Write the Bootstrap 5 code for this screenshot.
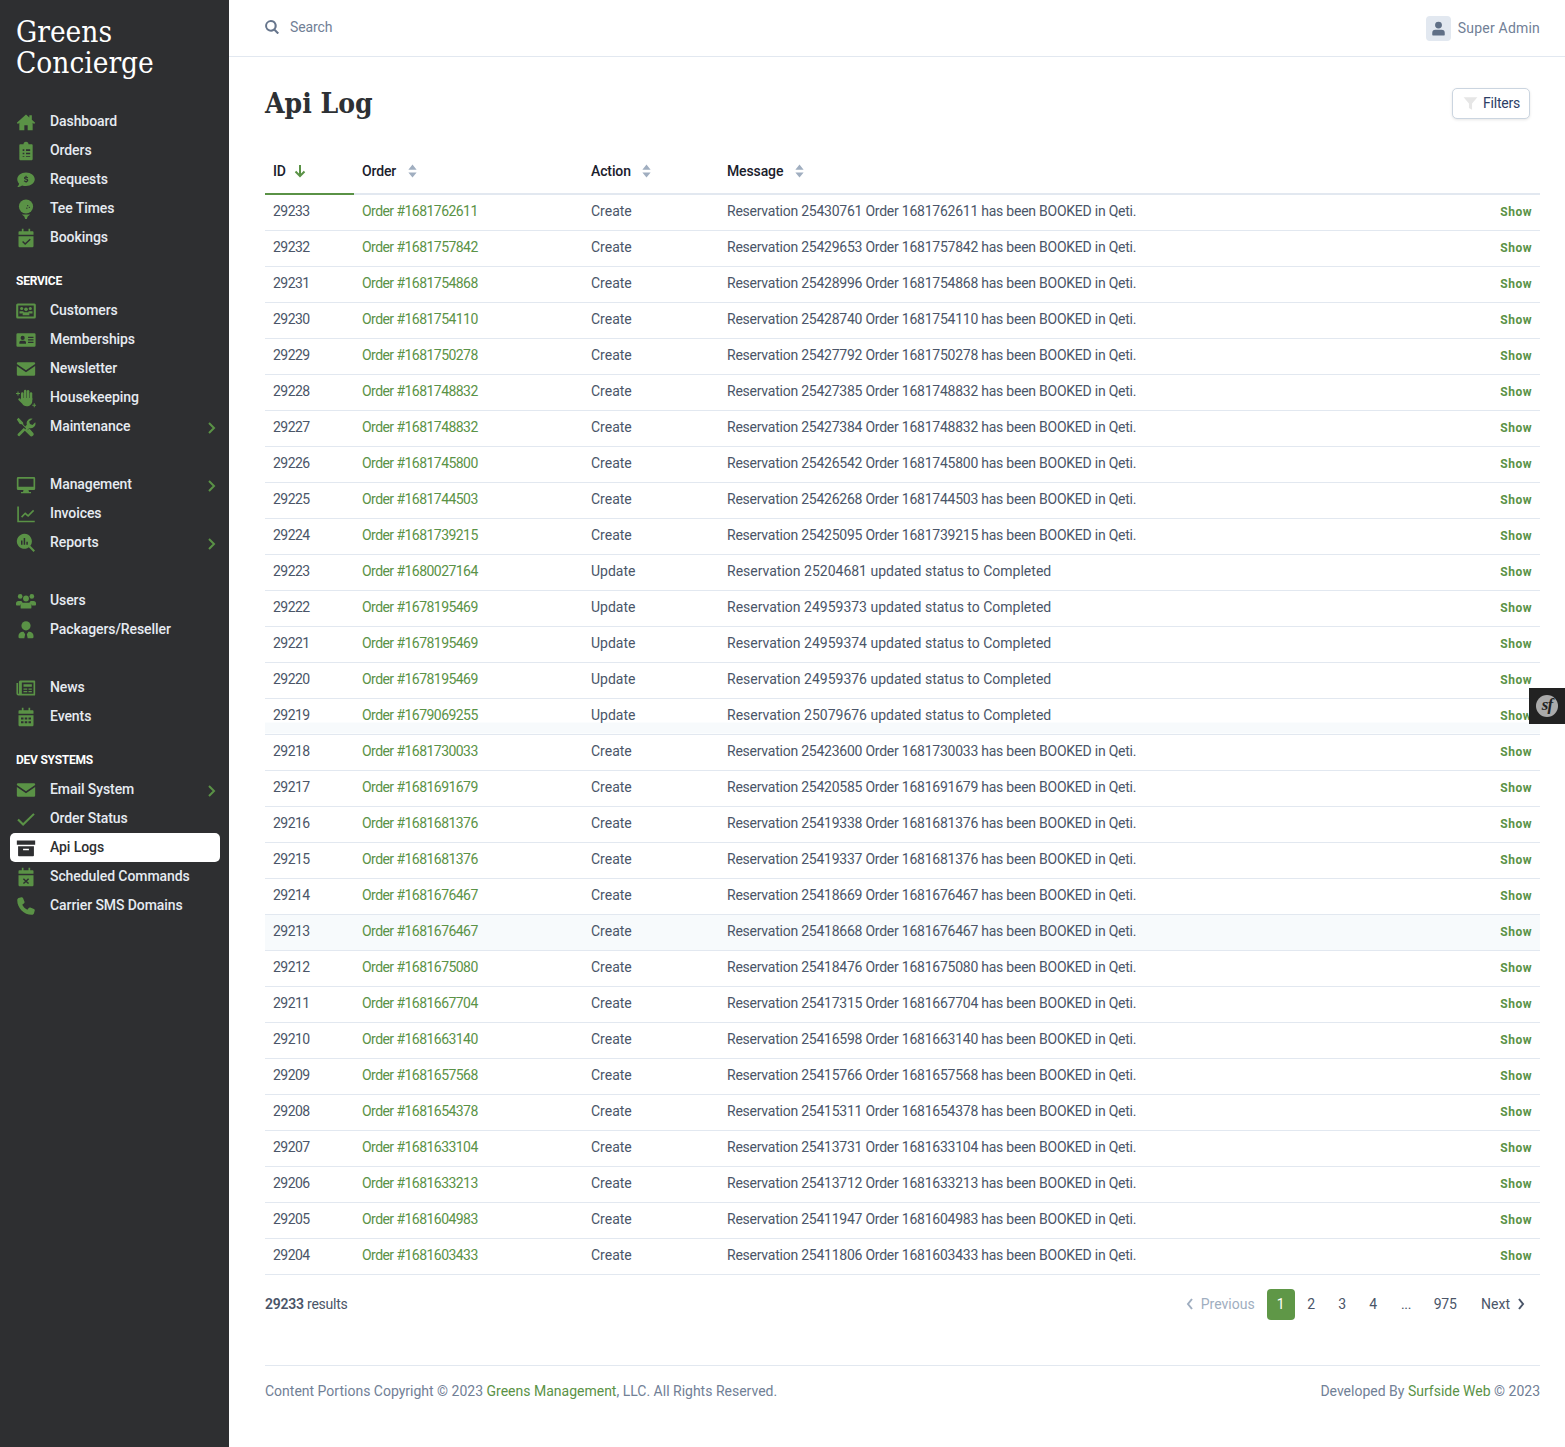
<!DOCTYPE html>
<html lang="en">
<head>
  <meta charset="UTF-8" />
  <title>Api Log</title>
  <link href="https://cdn.jsdelivr.net/npm/bootstrap@5.3.0/dist/css/bootstrap.min.css" rel="stylesheet" />
  <style>
    body { font-family: Roboto, "Noto Sans", sans-serif; font-size: 14px; color: #4a5568; background: #fff; letter-spacing: -.24px; }
    a { text-decoration: none; color: #5a9246; }
    .side-bar { width: 229px; flex: 0 0 229px; min-height: 1447px; background: #2e2f31; }
    .brand-name { font-family: "DejaVu Serif Condensed", "Liberation Serif", serif; font-size: 29.5px; line-height: 31px; color: #fff; padding: 17px 16px 0; height: 107px; letter-spacing: 0; }
    .side-group { margin-bottom: 29px; }
    .side-group.tight { margin-bottom: 15px; }
    .side-label { height: 29px; line-height: 29px; padding-left: 16px; font-size: 12px; font-weight: 700; color: #fff; }
    .side-link { display: flex; align-items: center; height: 29px; margin: 0 9px 0 10px; padding: 0 4px 0 6px; color: #e6ebf1; font-weight: 500; border-radius: 5px; letter-spacing: -.08px; }
    .side-link svg.ico { width: 20px; height: 20px; margin-right: 14px; fill: #5a9246; flex: none; }
    .side-link svg.chev { width: 10px; height: 12px; margin-left: auto; margin-top: 3px; stroke: #5a9246; stroke-width: 2; fill: none; }
    .side-link.current { background: #fff; color: #2e2f31; }
    .side-link.current svg.ico { fill: #2e2f31; }
    .main-area { flex: 1 1 auto; min-width: 0; }
    .top-strip { height: 57px; border-bottom: 1px solid #e2e8f0; padding: 0 25px 0 36px; }
    .top-strip svg { width: 14px; height: 14px; fill: #66758c; margin-right: 11px; }
    .search-box { padding-bottom: 2px; }
    .search-hint { color: #718096; letter-spacing: -.1px; }
    .who-box { width: 25px; height: 25px; background: #e2e8f0; border-radius: 4px; margin-right: 7px; }
    .who-box svg { width: 15px; height: 15px; margin: 0; fill: #5f6f86; }
    .who-name { color: #718096; letter-spacing: .2px; }
    .page-body { padding: 0 25px 0 36px; }
    .page-head { height: 92px; padding-right: 10px; }
    .page-title { font-family: "DejaVu Serif Condensed", "Liberation Serif", serif; font-size: 28px; font-weight: 700; color: #2d3034; margin: 0; padding-top: 1px; letter-spacing: 0; }
    .filter-btn { height: 31px; width: 78px; padding: 0 8px 0 10px; font-size: 14px; color: #2c3e66; background: #fff; border: 1px solid #cbd5e0; border-radius: 5px; box-shadow: 0 1px 3px rgba(0,0,0,.1); letter-spacing: -.2px; }
    .filter-btn svg { width: 15px; height: 15px; fill: #e6e6e6; margin-right: 5px; }
    .log-table { table-layout: fixed; margin: 0; width: 100%; font-size: 14px; color: #4a5568; }
    .log-table th { height: 45px; padding: 0 8px; font-weight: 500; color: #1a202c; border-bottom: 2px solid #e2e8f0; vertical-align: middle; letter-spacing: -.12px; }
    .log-table th.sorted { border-bottom-color: #5a9246; }
    .log-table th svg { width: 11px; height: 14px; margin-left: 7px; vertical-align: -2px; fill: #a0aec0; }
    .log-table th.sorted svg { width: 12px; margin-left: 5px; stroke: #5a9246; fill: none; stroke-width: 2; }
    .log-table td { height: 36px; padding: 0 8px 2px; vertical-align: middle; border-bottom: 1px solid #e2e8f0; color: #4a5568; }
    .log-table tr.hovered td { background: #f7fafc; }
    .log-table tr.half-hover td { background: linear-gradient(transparent 24px, #f7fafc 24px); }
    .log-table td a { color: #5a9246; }
    .log-table .num-cell { letter-spacing: -.55px; }
    .log-table .act-cell { letter-spacing: 0; }
    .log-table .msg-update { letter-spacing: 0; }
    .show-link { font-size: 12px; font-weight: 700; letter-spacing: .5px; }
    .results-row { height: 59px; }
    .pager-list { margin: 0 15px 0 0; align-items: center; }
    .pager-list .page-link { border: 0; background: none; color: #4a5568; padding: 0; height: 31px; line-height: 31px; font-size: 14px; text-align: center; box-shadow: none; }
    .pager-list .page-item.active .page-link { background: #5f9747; color: #fff; border-radius: 4px; width: 28px; }
    .pager-list .page-item.disabled .page-link { color: #a0aec0; letter-spacing: 0; }
    .pager-list svg { width: 8px; height: 12px; fill: none; stroke: currentColor; stroke-width: 2; vertical-align: -1px; }
    .pager-list .num { width: 31px; }
    .pager-list .gap-num { width: 35px; }
    .pager-list .last-num { width: 43px; }
    .pager-list .prev-item { margin-right: 13px; }
    .pager-list .next-item { margin-left: 15px; letter-spacing: 0; }
    .pager-list .first-num { margin-left: 1.5px; }
    .foot-row { margin-top: 31px; border-top: 1px solid #e2e8f0; height: 52px; color: #718096; letter-spacing: 0; }
    .sf-tab { position: fixed; right: 0; top: 688px; width: 36px; height: 36px; background: #222; display: flex; align-items: center; justify-content: center; }
    .sf-mark { width: 22px; height: 22px; border-radius: 50%; background: #aaa; color: #222; font-family: "Liberation Serif", serif; font-style: italic; font-weight: 700; font-size: 17px; line-height: 20px; text-align: center; letter-spacing: -1px; }
  </style>
</head>
<body>
  <svg width="0" height="0" class="position-absolute">
    <symbol id="i-home" viewBox="0 0 24 24"><path d="M12 3 1 13l1.300 1.400L4 13v9h6v-6h4v6h6v-9l1.700 1.400L23 13l-4-3.600V4h-3v2.700z"/></symbol>
    <symbol id="i-clip" viewBox="0 0 24 24"><path fill-rule="evenodd" d="M5 4h4a3 3 0 0 1 6 0h4a1 1 0 0 1 1 1v17a1 1 0 0 1-1 1H5a1 1 0 0 1-1-1V5a1 1 0 0 1 1-1zM8 10v2h2v-2zm4 0v2h5v-2zM8 14v2h2v-2zm4 0v2h5v-2zM8 18v1h2v-1zm4 0v1h5v-1z"/></symbol>
    <symbol id="i-req" viewBox="0 0 24 24"><path d="M12 3C6 3 1.500 6.600 1.500 11.200c0 2 .9 3.800 2.300 5.200-.5 2-2.200 3.900-2.300 4.100 2.600 0 4.600-1.100 5.800-2 1.500.5 3 .7 4.700.7 6 0 10.500-3.600 10.500-8S18 3 12 3z"/><path d="M12.700 7v1c.8.100 1.500.4 1.900.8l-.8 1c-.4-.3-1-.6-1.700-.6-.6 0-.9.200-.9.500 0 .9 3.500.6 3.500 2.900 0 .9-.7 1.600-2 1.800v1h-1.200v-1c-.9-.1-1.700-.5-2.200-1l.8-1c.5.400 1.100.7 1.900.7.700 0 1-.2 1-.6 0-1-3.400-.6-3.400-2.800 0-1 .8-1.700 1.900-1.800V7z" fill="#2e2f31"/></symbol>
    <symbol id="i-tee" viewBox="0 0 24 24"><circle cx="12" cy="9" r="8.500"/><path d="M7 18.500h10l-3 2.500-1 3h-2l-1-3z"/><circle cx="14" cy="8" r=".8" fill="#2e2f31"/><circle cx="16" cy="10" r=".8" fill="#2e2f31"/><circle cx="13" cy="11" r=".8" fill="#2e2f31"/></symbol>
    <symbol id="i-cal-ok" viewBox="0 0 24 24"><path fill-rule="evenodd" d="M7 1h2v3h6V1h2v3h3a1 1 0 0 1 1 1v3H3V5a1 1 0 0 1 1-1h3zM3 10h18v12a1 1 0 0 1-1 1H4a1 1 0 0 1-1-1zm13.500 3L11 18l-2.500-2.300-1.200 1.200L11 20.500l6.700-6.300z"/></symbol>
    <symbol id="i-crowd" viewBox="0 0 24 24"><path fill-rule="evenodd" d="M2 3h20a1.800 1.800 0 0 1 1.800 1.800v14.400A1.800 1.800 0 0 1 22 21H2a1.800 1.800 0 0 1-1.800-1.800V4.800A1.800 1.800 0 0 1 2 3zm.7 2.500v13h18.600v-13z"/><circle cx="6.800" cy="9" r="1.900"/><circle cx="17.200" cy="9" r="1.900"/><circle cx="12" cy="10" r="2.200"/><path d="M4.200 12.200h4.400l.8 1-1.900 1.800h-3.300zm15.600 0h-4.400l-.8 1 1.900 1.800h3.300zM9.500 13.400h5a1.500 1.500 0 0 1 1.500 1.500V17H8v-2.100a1.500 1.500 0 0 1 1.500-1.500z"/></symbol>
    <symbol id="i-card" viewBox="0 0 24 24"><path fill-rule="evenodd" d="M2 4h20a1.500 1.500 0 0 1 1.500 1.500v13A1.500 1.500 0 0 1 22 20H2a1.500 1.500 0 0 1-1.500-1.500v-13A1.500 1.500 0 0 1 2 4zm6 3a2.500 2.500 0 1 0 0 5 2.500 2.500 0 0 0 0-5zm-4 9.500h8V15a2 2 0 0 0-2-2H6a2 2 0 0 0-2 2zM14.500 8v1.500H21V8zm0 3v1.500H21V11zm0 3v1.500H21V14z"/></symbol>
    <symbol id="i-mail" viewBox="0 0 24 24"><path d="M2.500 4h19A1.500 1.500 0 0 1 23 5.500v.5l-11 7.500L1 6v-.5A1.500 1.500 0 0 1 2.500 4zM1 8.500l11 7.500 11-7.500v10A1.500 1.500 0 0 1 21.500 20h-19A1.500 1.500 0 0 1 1 18.500z"/></symbol>
    <symbol id="i-hand" viewBox="0 0 24 24"><rect x="6" y="5" width="3" height="10" rx="1.500"/><rect x="9.500" y="2" width="3" height="12" rx="1.500"/><rect x="13" y="2.500" width="3" height="12" rx="1.500"/><rect x="16.500" y="5" width="3" height="10" rx="1.500"/><path d="M6 12h13.500v4c0 3.500-3 6-6.500 6-3 0-4.500-1.500-5.500-3L3 14.500c-1-1.500 1-3 2.200-1.800L6 14zM0 6h1.800V4.200h1.200V6h1.800v1.200H3V9H1.800V7.200H0zm19.500 14h1.800v-1.800h1.200V20h1.500v1.200h-1.500V23h-1.200v-1.800h-1.800z"/></symbol>
    <symbol id="i-tools" viewBox="0 0 24 24"><path d="M3 1 1 3l3.500 5.500 2.500.3 5 5-2 2 6.500 6.500a2.500 2.500 0 0 0 4-3.500L16 13.800l-2 2-.3-.3 2.300-2.300 1.100.2a5.500 5.500 0 0 0 6-7.200l-3.300 3.300-3-1-1-3L20 2.200a5.500 5.500 0 0 0-7.200 6l.2 1.100L11 11.300 8.800 9l-.3-2.500zM9.500 13 2 20.500a2 2 0 0 0 2 2.500l7.500-7.500z"/></symbol>
    <symbol id="i-screen" viewBox="0 0 24 24"><path d="M2.500 2.500h19A1.500 1.500 0 0 1 23 4v12.500a1.500 1.500 0 0 1-1.500 1.500H15l.6 2.500H18V22H6v-1.500h2.400L9 18H2.500A1.500 1.500 0 0 1 1 16.500V4a1.500 1.500 0 0 1 1.500-1.500zm.5 2V14h18V4.500z" fill-rule="evenodd"/></symbol>
    <symbol id="i-chart" viewBox="0 0 24 24"><path d="M1.500 3h2v17h19v2h-21z"/><path d="m6 15 5-5 3.500 3 6-6 1.300 1.400-7.200 7.200-3.600-3L7.400 16.400z"/></symbol>
    <symbol id="i-rep" viewBox="0 0 24 24"><path fill-rule="evenodd" d="M10 1a9 9 0 0 1 7.200 14.400l5.600 5.600-1.800 1.800-5.600-5.600A9 9 0 1 1 10 1zM6 9v5h1.800V9zm3.200-3v8H11V6zm3.200 4.500V14h1.800v-3.500z"/></symbol>
    <symbol id="i-users" viewBox="0 0 24 24"><circle cx="5" cy="6.500" r="2.800"/><circle cx="19" cy="6.500" r="2.800"/><circle cx="12" cy="9" r="3.500"/><path d="M0 15a3 3 0 0 1 3-3h3.500c.4.900 1 1.600 1.700 2.200C6.500 15 5.200 16 5 17.500H1a1 1 0 0 1-1-1zm24 0a3 3 0 0 0-3-3h-3.500c-.4.900-1 1.600-1.700 2.200 1.700.8 3 1.800 3.200 3.300h4a1 1 0 0 0 1-1zM9 14h6a4 4 0 0 1 3.500 4v2a1 1 0 0 1-1 1h-11a1 1 0 0 1-1-1v-2A4 4 0 0 1 9 14z"/></symbol>
    <symbol id="i-tie" viewBox="0 0 24 24"><circle cx="12" cy="7" r="5.500"/><path d="M8 14h1l2 3-1 5H4.500A1.500 1.500 0 0 1 3 20.500V19a5 5 0 0 1 5-5zm8 0h-1l-2 3 1 5h5.500a1.500 1.500 0 0 0 1.500-1.500V19a5 5 0 0 0-5-5z"/></symbol>
    <symbol id="i-news" viewBox="0 0 24 24"><path fill-rule="evenodd" d="M6 3h16a1 1 0 0 1 1 1v16a1 1 0 0 1-1 1H3a2.500 2.500 0 0 1-2.500-2.500V6h2v12.500a.5.500 0 0 0 1 0V5A2 2 0 0 1 6 3zm1 2.500v13.500h14V5.500zM9 7.500h10v3H9zm0 5h4.500V14H9zm0 3h4.500V17H9zm6-3h4V14h-4zm0 3h4V17h-4z"/></symbol>
    <symbol id="i-cal" viewBox="0 0 24 24"><path fill-rule="evenodd" d="M7 1h2v3h6V1h2v3h3a1 1 0 0 1 1 1v3H3V5a1 1 0 0 1 1-1h3zM3 10h18v12a1 1 0 0 1-1 1H4a1 1 0 0 1-1-1zm3 2.500V15h3v-2.500zm4.500 0V15h3v-2.500zm4.500 0V15h3v-2.500zM6 17v2.500h3V17zm4.500 0v2.500h3V17zm4.500 0v2.500h3V17z"/></symbol>
    <symbol id="i-ok" viewBox="0 0 24 24"><path d="m8.500 20.500-7-7 1.800-1.700 5.200 5.100L20.700 5 22.500 6.700z"/></symbol>
    <symbol id="i-box" viewBox="0 0 24 24"><path fill-rule="evenodd" d="M1 3h22v5H1zM2.500 10h19v11a1 1 0 0 1-1 1h-17a1 1 0 0 1-1-1zm6 3v1.800h7V13z"/></symbol>
    <symbol id="i-cal-x" viewBox="0 0 24 24"><path fill-rule="evenodd" d="M7 1h2v3h6V1h2v3h3a1 1 0 0 1 1 1v3H3V5a1 1 0 0 1 1-1h3zM3 10h18v12a1 1 0 0 1-1 1H4a1 1 0 0 1-1-1zm6.500 3.500-1.200 1.200 2.500 2.300-2.500 2.300 1.200 1.200 2.500-2.300 2.500 2.300 1.200-1.200-2.500-2.300 2.500-2.300-1.200-1.200-2.500 2.300z"/></symbol>
    <symbol id="i-phone" viewBox="0 0 24 24"><path d="M6.500 1.500 3 2.500C2 3 1.500 4 1.500 5c0 9.500 8 17.500 17.500 17.500 1 0 2-.5 2.500-1.500l1-3.500c.2-.8-.2-1.500-1-1.900l-4.300-1.800c-.7-.3-1.400-.1-1.900.5l-1.700 2.200C10.800 15 9 13.200 7.500 10.400l2.200-1.700c.6-.5.800-1.200.5-1.900L8.400 2.500C8 1.700 7.300 1.300 6.500 1.500z"/></symbol>
    <symbol id="i-chev" viewBox="0 0 10 12"><path d="m3 1 5 5-5 5"/></symbol>
  </svg>

  <div class="d-flex">
    <aside class="side-bar">
      <div class="brand-name">Greens<br>Concierge</div>

      <div class="side-group tight">
        <a class="side-link" href="#"><svg class="ico"><use href="#i-home"/></svg>Dashboard</a>
        <a class="side-link" href="#"><svg class="ico"><use href="#i-clip"/></svg>Orders</a>
        <a class="side-link" href="#"><svg class="ico"><use href="#i-req"/></svg>Requests</a>
        <a class="side-link" href="#"><svg class="ico"><use href="#i-tee"/></svg>Tee Times</a>
        <a class="side-link" href="#"><svg class="ico"><use href="#i-cal-ok"/></svg>Bookings</a>
      </div>

      <div class="side-group">
        <div class="side-label">SERVICE</div>
        <a class="side-link" href="#"><svg class="ico"><use href="#i-crowd"/></svg>Customers</a>
        <a class="side-link" href="#"><svg class="ico"><use href="#i-card"/></svg>Memberships</a>
        <a class="side-link" href="#"><svg class="ico"><use href="#i-mail"/></svg>Newsletter</a>
        <a class="side-link" href="#"><svg class="ico"><use href="#i-hand"/></svg>Housekeeping</a>
        <a class="side-link" href="#"><svg class="ico"><use href="#i-tools"/></svg>Maintenance<svg class="chev"><use href="#i-chev"/></svg></a>
      </div>

      <div class="side-group">
        <a class="side-link" href="#"><svg class="ico"><use href="#i-screen"/></svg>Management<svg class="chev"><use href="#i-chev"/></svg></a>
        <a class="side-link" href="#"><svg class="ico"><use href="#i-chart"/></svg>Invoices</a>
        <a class="side-link" href="#"><svg class="ico"><use href="#i-rep"/></svg>Reports<svg class="chev"><use href="#i-chev"/></svg></a>
      </div>

      <div class="side-group">
        <a class="side-link" href="#"><svg class="ico"><use href="#i-users"/></svg>Users</a>
        <a class="side-link" href="#"><svg class="ico"><use href="#i-tie"/></svg>Packagers/Reseller</a>
      </div>

      <div class="side-group tight">
        <a class="side-link" href="#"><svg class="ico"><use href="#i-news"/></svg>News</a>
        <a class="side-link" href="#"><svg class="ico"><use href="#i-cal"/></svg>Events</a>
      </div>

      <div class="side-group">
        <div class="side-label">DEV SYSTEMS</div>
        <a class="side-link" href="#"><svg class="ico"><use href="#i-mail"/></svg>Email System<svg class="chev"><use href="#i-chev"/></svg></a>
        <a class="side-link" href="#"><svg class="ico"><use href="#i-ok"/></svg>Order Status</a>
        <a class="side-link current" href="#"><svg class="ico"><use href="#i-box"/></svg>Api Logs</a>
        <a class="side-link" href="#"><svg class="ico"><use href="#i-cal-x"/></svg>Scheduled Commands</a>
        <a class="side-link" href="#"><svg class="ico"><use href="#i-phone"/></svg>Carrier SMS Domains</a>
      </div>
    </aside>

    <div class="main-area">
      <div class="top-strip d-flex align-items-center justify-content-between">
        <div class="d-flex align-items-center search-box">
          <svg viewBox="0 0 24 24"><path fill-rule="evenodd" d="M10 0a10 10 0 0 1 8 16l6 6-2.500 2.500-6-6A10 10 0 1 1 10 0zm0 3.500a6.500 6.500 0 1 0 0 13 6.500 6.500 0 0 0 0-13z"/></svg>
          <span class="search-hint">Search</span>
        </div>
        <div class="d-flex align-items-center">
          <span class="who-box d-flex align-items-center justify-content-center">
            <svg viewBox="0 0 24 24"><circle cx="12" cy="6.500" r="5.500"/><path d="M7 14h10a5 5 0 0 1 5 5v3a1 1 0 0 1-1 1H3a1 1 0 0 1-1-1v-3a5 5 0 0 1 5-5z"/></svg>
          </span>
          <span class="who-name">Super Admin</span>
        </div>
      </div>

      <div class="page-body">
        <div class="page-head d-flex align-items-center justify-content-between">
          <h1 class="page-title">Api Log</h1>
          <button class="filter-btn d-flex align-items-center" type="button">
            <svg viewBox="0 0 24 24"><path d="M1 2h22l-8.500 10v10l-5-3v-7z"/></svg>Filters
          </button>
        </div>

        <table class="table log-table">
          <colgroup><col style="width:89px"><col style="width:229px"><col style="width:136px"><col><col style="width:100px"></colgroup>
          <thead>
            <tr>
              <th class="sorted">ID <svg viewBox="0 0 12 14"><path d="M6 1v11M1.500 7.500 6 12l4.500-4.500"/></svg></th>
              <th>Order <svg viewBox="0 0 12 14"><path d="M6 0l4.500 5.500h-9zM6 14l-4.500-5.500h9z"/></svg></th>
              <th>Action <svg viewBox="0 0 12 14"><path d="M6 0l4.500 5.500h-9zM6 14l-4.500-5.500h9z"/></svg></th>
              <th>Message <svg viewBox="0 0 12 14"><path d="M6 0l4.500 5.500h-9zM6 14l-4.500-5.500h9z"/></svg></th>
              <th></th>
            </tr>
          </thead>
          <tbody id="log-rows"></tbody>
        </table>

        <div class="results-row d-flex align-items-center justify-content-between">
          <div><strong class="fw-semibold">29233</strong> results</div>
          <ul class="pagination pager-list">
            <li class="page-item disabled prev-item"><a class="page-link" href="#"><svg viewBox="0 0 8 12"><path d="M6 1 2 6l4 5"/></svg>&nbsp; Previous</a></li>
            <li class="page-item active"><a class="page-link" href="#">1</a></li>
            <li class="page-item num first-num"><a class="page-link" href="#">2</a></li>
            <li class="page-item num"><a class="page-link" href="#">3</a></li>
            <li class="page-item num"><a class="page-link" href="#">4</a></li>
            <li class="page-item gap-num"><a class="page-link" href="#">...</a></li>
            <li class="page-item last-num"><a class="page-link" href="#">975</a></li>
            <li class="page-item next-item"><a class="page-link" href="#">Next &nbsp;<svg viewBox="0 0 8 12"><path d="m2 1 4 5-4 5"/></svg></a></li>
          </ul>
        </div>

        <div class="foot-row d-flex align-items-center justify-content-between">
          <div>Content Portions Copyright © 2023 <a href="#">Greens Management</a>, LLC. All Rights Reserved.</div>
          <div>Developed By <a href="#">Surfside Web</a> © 2023</div>
        </div>
      </div>
    </div>
  </div>

  <div class="sf-tab"><div class="sf-mark">sf</div></div>

  <script src="https://cdn.jsdelivr.net/npm/bootstrap@5.3.0/dist/js/bootstrap.bundle.min.js"></script>
  <script>
    // id, order, reservation, action
    const logs = [
      [29233, '1681762611', '25430761', 'Create'], [29232, '1681757842', '25429653', 'Create'],
      [29231, '1681754868', '25428996', 'Create'], [29230, '1681754110', '25428740', 'Create'],
      [29229, '1681750278', '25427792', 'Create'], [29228, '1681748832', '25427385', 'Create'],
      [29227, '1681748832', '25427384', 'Create'], [29226, '1681745800', '25426542', 'Create'],
      [29225, '1681744503', '25426268', 'Create'], [29224, '1681739215', '25425095', 'Create'],
      [29223, '1680027164', '25204681', 'Update'], [29222, '1678195469', '24959373', 'Update'],
      [29221, '1678195469', '24959374', 'Update'], [29220, '1678195469', '24959376', 'Update'],
      [29219, '1679069255', '25079676', 'Update'], [29218, '1681730033', '25423600', 'Create'],
      [29217, '1681691679', '25420585', 'Create'], [29216, '1681681376', '25419338', 'Create'],
      [29215, '1681681376', '25419337', 'Create'], [29214, '1681676467', '25418669', 'Create'],
      [29213, '1681676467', '25418668', 'Create'], [29212, '1681675080', '25418476', 'Create'],
      [29211, '1681667704', '25417315', 'Create'], [29210, '1681663140', '25416598', 'Create'],
      [29209, '1681657568', '25415766', 'Create'], [29208, '1681654378', '25415311', 'Create'],
      [29207, '1681633104', '25413731', 'Create'], [29206, '1681633213', '25413712', 'Create'],
      [29205, '1681604983', '25411947', 'Create'], [29204, '1681603433', '25411806', 'Create']
    ];
    document.getElementById('log-rows').innerHTML = logs.map(([id, order, res, action]) => {
      const msg = action === 'Create'
        ? `Reservation ${res} Order ${order} has been BOOKED in Qeti.`
        : `Reservation ${res} updated status to Completed`;
      const rowClass = id === 29213 ? 'hovered' : id === 29219 ? 'half-hover' : '';
      return `<tr class="${rowClass}">
        <td class="num-cell">${id}</td>
        <td class="num-cell"><a href="#">Order #${order}</a></td>
        <td class="act-cell">${action}</td>
        <td class="${action === 'Update' ? 'msg-update' : ''}">${msg}</td>
        <td class="text-end"><a class="show-link" href="#">Show</a></td>
      </tr>`;
    }).join('');
  </script>
</body>
</html>
